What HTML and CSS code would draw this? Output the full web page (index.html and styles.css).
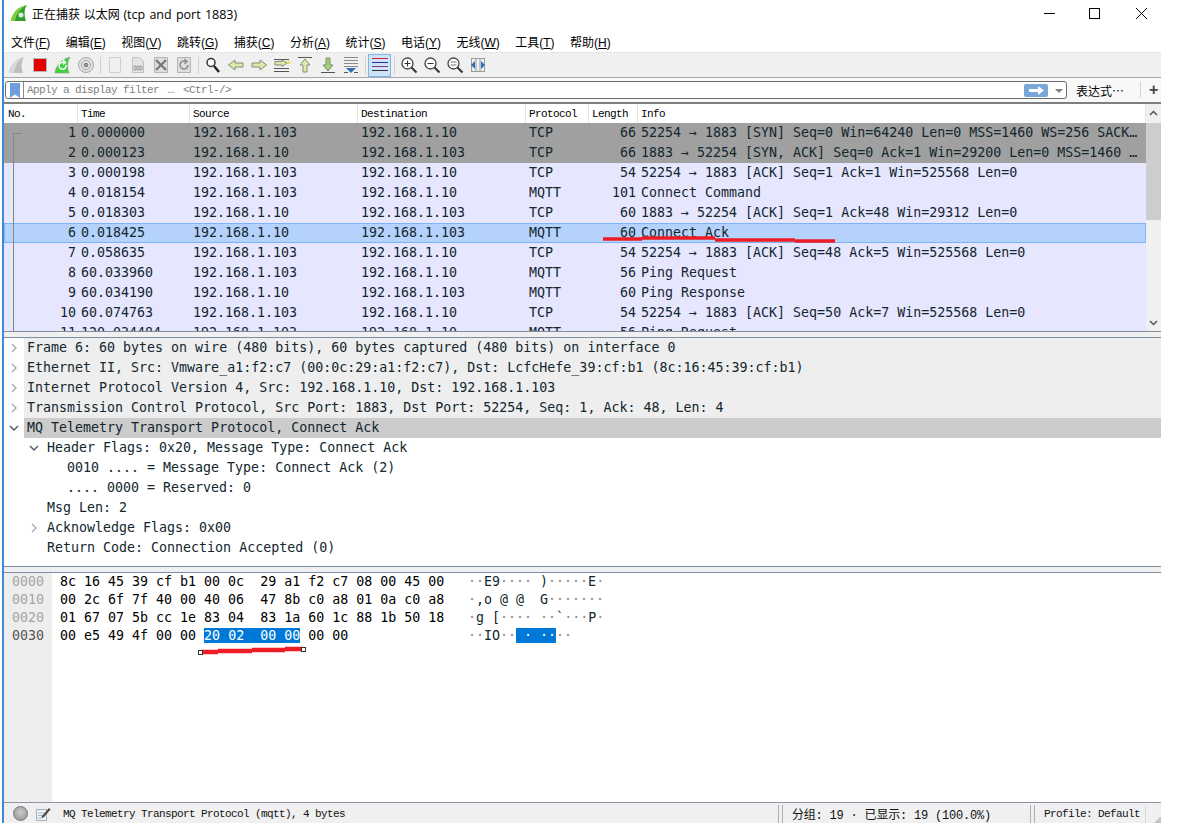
FILE: index.html
```html
<!DOCTYPE html>
<html lang="zh-CN">

<head>
    <meta charset="UTF-8">
    <title>正在捕获 以太网 (tcp and port 1883)</title>
    <link rel="stylesheet" href="styles.css">
</head>

<body>
    <div class="window">
        <div class="titlebar">
            <svg class="app-icon" width="16" height="16" viewBox="0 0 16 16"><path d="M0 16C1 8 7 2 16 0c-3 4-3 10-1 16z" fill="#2e9e2e"/><path d="M0 16C1 8 7 2 16 0C9 4 5 9 4 16z" fill="#7fd03a"/><circle cx="10" cy="10" r="2.5" fill="#d9f2d9"/></svg>
            <span class="title">正在捕获 以太网 <em>(tcp and port 1883)</em></span>
            <div class="win-btns">
                <svg width="46" height="20" viewBox="0 0 46 20"><path d="M18 10.5h11" stroke="#000"/></svg>
                <svg width="46" height="20" viewBox="0 0 46 20"><rect x="17.5" y="5.5" width="10" height="10" fill="none" stroke="#000"/></svg>
                <svg width="46" height="20" viewBox="0 0 46 20"><path d="M18 5l11 11M29 5L18 16" stroke="#000" fill="none"/></svg>
            </div>
        </div>

        <ul class="menubar">
            <li>文件(<u>F</u>)</li>
            <li>编辑(<u>E</u>)</li>
            <li>视图(<u>V</u>)</li>
            <li>跳转(<u>G</u>)</li>
            <li>捕获(<u>C</u>)</li>
            <li>分析(<u>A</u>)</li>
            <li>统计(<u>S</u>)</li>
            <li>电话(<u>Y</u>)</li>
            <li>无线(<u>W</u>)</li>
            <li>工具(<u>T</u>)</li>
            <li>帮助(<u>H</u>)</li>
        </ul>

        <div class="toolbar">
            <span class="tool"><svg width="18" height="18" viewBox="0 0 18 18"><path d="M1 17C2 9 8 3 16 1c-3 5-3 11-1 16z" fill="#bdbdbd"/><path d="M1 17C2 9 8 3 16 1C10 5 7 10 6 17z" fill="#d8d8d8"/></svg></span>
            <span class="tool"><svg width="18" height="18" viewBox="0 0 18 18"><rect x="2.5" y="2.5" width="13" height="13" fill="#e00000" stroke="#b5b5b5"/></svg></span>
            <span class="tool"><svg width="18" height="18" viewBox="0 0 18 18"><path d="M1 17C2 9 8 3 16 1c-3 5-3 11-1 16z" fill="#3fd13f" stroke="#8a9a8a" stroke-width=".6"/><path d="M12 9a3.5 3.5 0 1 1-2-2.5M9 4l2.5 2.5L9 8.500" fill="none" stroke="#fff" stroke-width="1.500"/></svg></span>
            <span class="tool"><svg width="18" height="18" viewBox="0 0 18 18"><circle cx="9" cy="9" r="7.500" fill="#e2e2e2" stroke="#a8a8a8"/><circle cx="9" cy="9" r="4.500" fill="#f2f2f2" stroke="#a0a0a0"/><circle cx="9" cy="9" r="2.500" fill="#8f8f8f"/></svg></span>
            <i class="sep"></i>
            <span class="tool"><svg width="18" height="18" viewBox="0 0 18 18"><path d="M3.500 1.500h11v15h-11z" fill="#efefef" stroke="#cfcfcf"/></svg></span>
            <span class="tool"><svg width="18" height="18" viewBox="0 0 18 18"><path d="M3.500 1.500h7l4 4v11h-11z" fill="#e4e4e4" stroke="#c0c0c0"/><path d="M5 10h2v4H5zM8 10h2v4H8zM11 10h2v4h-2z" fill="none" stroke="#909090" stroke-width=".8"/></svg></span>
            <span class="tool"><svg width="18" height="18" viewBox="0 0 18 18"><path d="M2.500 1.500h13v15h-13z" fill="#dedede" stroke="#b5b5b5"/><path d="M4 4l10 10M14 4L4 14" stroke="#777" stroke-width="2.200"/></svg></span>
            <span class="tool"><svg width="18" height="18" viewBox="0 0 18 18"><path d="M2.500 1.500h13v15h-13z" fill="#dedede" stroke="#b5b5b5"/><path d="M13 9a4 4 0 1 1-2-3.500M9.500 3l2.500 2.500L9.500 8" fill="none" stroke="#8f8f8f" stroke-width="1.600"/></svg></span>
            <i class="sep"></i>
            <span class="tool"><svg width="18" height="18" viewBox="0 0 18 18"><circle cx="7" cy="6.500" r="4" fill="#fff" stroke="#333" stroke-width="1.500"/><path d="M10 10l5 6" stroke="#222" stroke-width="2.400"/></svg></span>
            <span class="tool"><svg width="18" height="18" viewBox="0 0 18 18"><path d="M1.500 9L8 4v3h8v4H8v3z" fill="#dcebaa" stroke="#7f8f77"/></svg></span>
            <span class="tool"><svg width="18" height="18" viewBox="0 0 18 18"><path d="M16.500 9L10 4v3H2v4h8v3z" fill="#dcebaa" stroke="#7f8f77"/></svg></span>
            <span class="tool"><svg width="18" height="18" viewBox="0 0 18 18"><path d="M1 3.500h15M1 12.500h15M1 15.500h15" stroke="#555"/><path d="M14 7L9 4v1.500H2v3.500h7v1.500z" fill="#dcebaa" stroke="#7f8f77"/><rect x="14" y="5" width="3" height="3" fill="#f0e050"/></svg></span>
            <span class="tool"><svg width="18" height="18" viewBox="0 0 18 18"><path d="M2 1.500h14" stroke="#555"/><path d="M9 3l5 6h-3v7H7V9H4z" fill="#dcebaa" stroke="#7f8f77"/></svg></span>
            <span class="tool"><svg width="18" height="18" viewBox="0 0 18 18"><path d="M2 16.500h14" stroke="#555"/><path d="M9 15l5-6h-3V2H7v7H4z" fill="#9fd070" stroke="#7f8f77"/></svg></span>
            <span class="tool"><svg width="18" height="18" viewBox="0 0 18 18"><path d="M2 1.500h14M2 4.500h14M2 7.500h14M2 10.500h14" stroke="#8a8a8a"/><path d="M4 12h10l-5 5z" fill="#2f6fb5"/><path d="M2 16.500h4M12 16.500h4" stroke="#555"/></svg></span>
            <i class="sep"></i>
            <span class="tool active"><svg width="18" height="18" viewBox="0 0 18 18"><path d="M1 2.500h16" stroke="#d8203c"/><path d="M1 6.500h16" stroke="#2c2c9c"/><path d="M1 10.500h16" stroke="#8c2c8c"/><path d="M1 14.500h16" stroke="#333"/></svg></span>
            <i class="sep"></i>
            <span class="tool"><svg width="18" height="18" viewBox="0 0 18 18"><circle cx="7.500" cy="7.500" r="5.500" fill="#fff" stroke="#444" stroke-width="1.300"/><path d="M11.500 11.500l5 5" stroke="#333" stroke-width="2"/><path d="M4.500 7.500h6M7.500 4.500v6" stroke="#333"/></svg></span>
            <span class="tool"><svg width="18" height="18" viewBox="0 0 18 18"><circle cx="7.500" cy="7.500" r="5.500" fill="#fff" stroke="#444" stroke-width="1.300"/><path d="M11.500 11.500l5 5" stroke="#333" stroke-width="2"/><path d="M4.500 7.500h6" stroke="#333"/></svg></span>
            <span class="tool"><svg width="18" height="18" viewBox="0 0 18 18"><circle cx="7.500" cy="7.500" r="5.500" fill="#fff" stroke="#444" stroke-width="1.300"/><path d="M11.500 11.500l5 5" stroke="#333" stroke-width="2"/><path d="M4.500 6h6M4.500 9h6" stroke="#777"/></svg></span>
            <span class="tool"><svg width="18" height="18" viewBox="0 0 18 18"><path d="M2.500 2v14M15.500 2v14M2 2.500h14M2 15.500h14M7 2v14M11 2v14" stroke="#9a9a9a"/><path d="M2 9l4-4v8zM16 9l-4-4v8z" fill="#2f6fb5"/></svg></span>
        </div>

        <div class="filterbar">
            <div class="filter-box">
                <span class="bookmark"><svg width="10" height="15" viewBox="0 0 10 15"><path d="M0 0h10v15L5 11.500 0 15z" fill="#6e9fdc"/></svg></span>
                <span class="filter-hint">Apply a display filter <span class="ell">…</span> &lt;Ctrl-/&gt;</span>
                <span class="go-btn"><svg width="24" height="13" viewBox="0 0 24 13"><rect width="24" height="13" rx="2" fill="#7aa7d9"/><path d="M5 5h9V2l6 4.500-6 4.500V8H5z" fill="#fff"/></svg></span>
                <span class="drop"></span>
            </div>
            <span class="expr">表达式…</span>
            <i class="expr-sep"></i>
            <span class="plus">+</span>
        </div>

        <div class="packets">
            <div class="packet-table">
                <div class="cols cols-head">
                    <span>No.</span><span>Time</span><span>Source</span><span>Destination</span><span>Protocol</span><span>Length</span><span>Info</span>
                </div>
                <div class="cols row syn"><span class="num">1</span><span>0.000000</span><span>192.168.1.103</span><span>192.168.1.10</span><span>TCP</span><span class="num">66</span><span>52254 → 1883 [SYN] Seq=0 Win=64240 Len=0 MSS=1460 WS=256 SACK…</span></div>
                <div class="cols row syn"><span class="num">2</span><span>0.000123</span><span>192.168.1.10</span><span>192.168.1.103</span><span>TCP</span><span class="num">66</span><span>1883 → 52254 [SYN, ACK] Seq=0 Ack=1 Win=29200 Len=0 MSS=1460 …</span></div>
                <div class="cols row"><span class="num">3</span><span>0.000198</span><span>192.168.1.103</span><span>192.168.1.10</span><span>TCP</span><span class="num">54</span><span>52254 → 1883 [ACK] Seq=1 Ack=1 Win=525568 Len=0</span></div>
                <div class="cols row"><span class="num">4</span><span>0.018154</span><span>192.168.1.103</span><span>192.168.1.10</span><span>MQTT</span><span class="num">101</span><span>Connect Command</span></div>
                <div class="cols row"><span class="num">5</span><span>0.018303</span><span>192.168.1.10</span><span>192.168.1.103</span><span>TCP</span><span class="num">60</span><span>1883 → 52254 [ACK] Seq=1 Ack=48 Win=29312 Len=0</span></div>
                <div class="cols row current"><span class="num">6</span><span>0.018425</span><span>192.168.1.10</span><span>192.168.1.103</span><span>MQTT</span><span class="num">60</span><span>Connect Ack</span></div>
                <div class="cols row"><span class="num">7</span><span>0.058635</span><span>192.168.1.103</span><span>192.168.1.10</span><span>TCP</span><span class="num">54</span><span>52254 → 1883 [ACK] Seq=48 Ack=5 Win=525568 Len=0</span></div>
                <div class="cols row"><span class="num">8</span><span>60.033960</span><span>192.168.1.103</span><span>192.168.1.10</span><span>MQTT</span><span class="num">56</span><span>Ping Request</span></div>
                <div class="cols row"><span class="num">9</span><span>60.034190</span><span>192.168.1.10</span><span>192.168.1.103</span><span>MQTT</span><span class="num">60</span><span>Ping Response</span></div>
                <div class="cols row"><span class="num">10</span><span>60.074763</span><span>192.168.1.103</span><span>192.168.1.10</span><span>TCP</span><span class="num">54</span><span>52254 → 1883 [ACK] Seq=50 Ack=7 Win=525568 Len=0</span></div>
                <div class="cols row"><span class="num">11</span><span>120.034484</span><span>192.168.1.103</span><span>192.168.1.10</span><span>MQTT</span><span class="num">56</span><span>Ping Request</span></div>
                <i class="conv-line"></i>
            </div>
            <div class="scrollbar">
                <svg class="sb-arrow" width="15" height="19" viewBox="0 0 15 19"><path d="M4 11l3.500-3.500L11 11" fill="none" stroke="#555" stroke-width="1.500"/></svg>
                <div class="sb-thumb"></div>
                <div class="sb-track"></div>
                <svg class="sb-arrow" width="15" height="17" viewBox="0 0 15 17"><path d="M4 7l3.500 3.500L11 7" fill="none" stroke="#555" stroke-width="1.500"/></svg>
            </div>
        </div>

        <div class="splitter"></div>

        <div class="details">
            <div class="node closed"><svg class="chev" width="10" height="10" viewBox="0 0 10 10"><path d="M3 1l4 4-4 4" /></svg><span>Frame 6: 60 bytes on wire (480 bits), 60 bytes captured (480 bits) on interface 0</span></div>
            <div class="node closed"><svg class="chev" width="10" height="10" viewBox="0 0 10 10"><path d="M3 1l4 4-4 4" /></svg><span>Ethernet II, Src: Vmware_a1:f2:c7 (00:0c:29:a1:f2:c7), Dst: LcfcHefe_39:cf:b1 (8c:16:45:39:cf:b1)</span></div>
            <div class="node closed"><svg class="chev" width="10" height="10" viewBox="0 0 10 10"><path d="M3 1l4 4-4 4" /></svg><span>Internet Protocol Version 4, Src: 192.168.1.10, Dst: 192.168.1.103</span></div>
            <div class="node closed"><svg class="chev" width="10" height="10" viewBox="0 0 10 10"><path d="M3 1l4 4-4 4" /></svg><span>Transmission Control Protocol, Src Port: 1883, Dst Port: 52254, Seq: 1, Ack: 48, Len: 4</span></div>
            <div class="node picked"><svg class="chev open" width="10" height="10" viewBox="0 0 10 10"><path d="M1 3l4 4 4-4" /></svg><span>MQ Telemetry Transport Protocol, Connect Ack</span></div>
            <div class="node lvl1"><svg class="chev open" width="10" height="10" viewBox="0 0 10 10"><path d="M1 3l4 4 4-4" /></svg><span>Header Flags: 0x20, Message Type: Connect Ack</span></div>
            <div class="node lvl2"><span>0010 .... = Message Type: Connect Ack (2)</span></div>
            <div class="node lvl2"><span>.... 0000 = Reserved: 0</span></div>
            <div class="node lvl1 leaf"><span>Msg Len: 2</span></div>
            <div class="node lvl1"><svg class="chev" width="10" height="10" viewBox="0 0 10 10"><path d="M3 1l4 4-4 4" /></svg><span>Acknowledge Flags: 0x00</span></div>
            <div class="node lvl1 leaf"><span>Return Code: Connection Accepted (0)</span></div>
        </div>

        <div class="splitter splitter2"></div>

        <div class="bytes">
            <div class="offsets">
                <div>0000</div>
                <div>0010</div>
                <div>0020</div>
                <div class="on">0030</div>
            </div>
            <div class="hex">
                <div>8c 16 45 39 cf b1 00 0c  29 a1 f2 c7 08 00 45 00</div>
                <div>00 2c 6f 7f 40 00 40 06  47 8b c0 a8 01 0a c0 a8</div>
                <div>01 67 07 5b cc 1e 83 04  83 1a 60 1c 88 1b 50 18</div>
                <div>00 e5 49 4f 00 00 <b>20 02  00 00</b> 00 00</div>
            </div>
            <div class="ascii">
                <div><s>··</s>E9<s>····</s> )<s>·····</s>E<s>·</s></div>
                <div><s>·</s>,o @ @  G<s>·······</s></div>
                <div><s>·</s>g [<s>····</s> <s>··</s>`<s>···</s>P<s>·</s></div>
                <div><s>··</s>IO<s>··</s><b> · ··</b><s>··</s></div>
            </div>
        </div>

        <div class="statusbar">
            <span class="led"></span>
            <svg class="note" width="16" height="16" viewBox="0 0 16 16"><path d="M1.500 3.500h10v11h-10z" fill="#eef3f7" stroke="#9fb0bd"/><path d="M3 7h6M3 9.500h6M3 12h4" stroke="#a8b8c4"/><path d="M7 10l7-8 1.500 1.500-7 8-2 .5z" fill="#444"/></svg>
            <span class="st-text st-main">MQ Telemetry Transport Protocol (mqtt), 4 bytes</span>
            <i class="grip"></i>
            <span class="st-text st-count">分组: 19 · 已显示: 19 (100.0%)</span>
            <i class="grip"></i>
            <span class="st-text st-profile">Profile: Default</span>
            <i class="st-sep"></i>
            <svg class="size-grip" width="6" height="6" viewBox="0 0 6 6"><path d="M4 0h2v2H4zM2 2h2v2H2zM4 2h2v2H4zM0 4h2v2H0zM2 4h2v2H2zM4 4h2v2H4z" fill="#c4c4c4"/></svg>
        </div>

        <!-- red marks drawn over the shot -->
        <svg class="marks" width="1159" height="823" viewBox="2 0 1159 823">
            <path d="M603 239h39M642 238h73M715 240h80M795 241h40" fill="none" stroke="#ee1c25" stroke-width="3.500"/>
            <path d="M201 652h17M218 651h34M252 650h33M285 649h18" fill="none" stroke="#ee1c25" stroke-width="4.500"/>
            <rect x="198.500" y="650.500" width="4" height="4" fill="#fff" stroke="#333"/>
            <rect x="301.500" y="647.500" width="4" height="4" fill="#fff" stroke="#333"/>
        </svg>
    </div>
</body>

</html>
```

FILE: styles.css
```css
* {
    margin: 0;
    padding: 0;
    box-sizing: border-box;
}

body {
    background: #fff;
    font-family: "Noto Sans CJK SC", sans-serif;
    overflow: hidden;
}

ul {
    list-style: none;
}

.window {
    position: relative;
    width: 1159px;
    height: 823px;
    margin-left: 2px;
    border-left: 2px solid #3c8ad8;
    display: flex;
    flex-direction: column;
    overflow: hidden;
}

.window > * {
    flex: none;
}

/* title */
.titlebar {
    height: 30px;
    display: flex;
    align-items: center;
    padding-left: 7px;
    background: #fff;
}

.app-icon {
    margin-top: -4px;
}

.title {
    margin-left: 5px;
    margin-top: -3px;
    font: 12px "Noto Sans CJK SC", sans-serif;
    word-spacing: 1px;
    color: #000;
}

.title em {
    font: 12.5px "Open Sans", sans-serif;
    word-spacing: 1px;
}

.win-btns {
    margin-left: auto;
    margin-right: -3px;
    display: flex;
    margin-top: -5px;
}

/* menu */
.menubar {
    height: 22px;
    display: flex;
    gap: 15.5px;
    padding-left: 7px;
    align-items: center;
    font: 12px "Liberation Sans", "Noto Sans CJK SC", sans-serif;
    color: #000;
}

/* tools */
.toolbar {
    height: 26px;
    display: flex;
    align-items: center;
    padding-left: 1px;
    background: #f0f0f0;
    border-top: 1px solid #e6e6e6;
    border-bottom: 1px solid #a8a8a8;
}

.tool {
    width: 23px;
    height: 23px;
    display: flex;
    align-items: center;
    justify-content: center;
}

.tool.active {
    background: #cde4f7;
    border: 1px solid #7eb4ea;
}

.sep {
    width: 6px;
    height: 17px;
    display: block;
    background: linear-gradient(#d0d0d0, #d0d0d0) no-repeat center / 1px 100%;
}

/* filter */
.filterbar {
    height: 26px;
    display: flex;
    align-items: center;
    background: #f8f8f8;
    padding-left: 1px;
    border-bottom: 2px solid #7f7f7f;
}

.filter-box {
    width: 1062px;
    height: 18px;
    display: flex;
    align-items: center;
    background: #fff;
    border: 1px solid #6d6d6d;
    border-radius: 3px;
}

.bookmark {
    width: 18px;
    height: 16px;
    display: flex;
    align-items: center;
    justify-content: center;
    border-right: 1px solid #8a8a8a;
}

.filter-hint {
    margin-left: 3px;
    font: 11px "Liberation Mono", monospace;
    letter-spacing: -.6px;
    color: #808080;
    white-space: pre;
}

.ell {
    display: inline-block;
    width: 12px;
    letter-spacing: 0;
    text-align: center;
}

.go-btn {
    margin-left: auto;
    height: 13px;
    line-height: 0;
}

.drop {
    width: 0;
    height: 0;
    margin: 1px 3px 0 7px;
    border: 4px solid transparent;
    border-top: 4px solid #808080;
    border-bottom: 0;
}

.expr {
    margin-left: 9px;
    font-size: 12px;
    color: #000;
}

.expr-sep {
    width: 1px;
    height: 16px;
    margin-left: 16px;
    background: #d4d4d4;
}

.plus {
    margin-left: 8px;
    font: bold 16px "Liberation Sans", sans-serif;
    color: #444;
}

/* packet list */
.packets {
    height: 227px;
    display: flex;
    overflow: hidden;
}

.packet-table {
    position: relative;
    flex: 1;
    overflow: hidden;
}

.cols {
    display: grid;
    grid-template-columns: 74px 112px 168px 168px 63px 49px 1fr;
}

.cols-head {
    height: 19px;
    align-items: center;
    background: #fff;
    font: 11px "Liberation Mono", monospace;
    letter-spacing: -.6px;
    color: #000;
}

.cols-head span {
    height: 19px;
    line-height: 21px;
    padding-left: 4px;
    border-right: 1px solid #e4e4e4;
    white-space: pre;
}

.cols-head span:nth-child(n+2) {
    padding-left: 3px;
}

.row {
    height: 20px;
    background: #e7e6ff;
    color: #12272e;
    font: 13.3px/20px "DejaVu Sans Mono", monospace;
    white-space: pre;
    overflow: hidden;
}

.row span {
    padding-left: 3px;
    overflow: hidden;
}

.row .num {
    padding: 0 2px 0 0;
    text-align: right;
}

.row.syn {
    background: #a0a0a0;
}

.row.current {
    background: #b5d2fc;
    box-shadow: inset 0 0 0 1px #7db4f8;
}

.conv-line {
    position: absolute;
    left: 9px;
    top: 29px;
    width: 9px;
    height: 200px;
    border-left: 1px solid #7c8a90;
    border-top: 1px solid #7c8a90;
}

.scrollbar {
    width: 15px;
    display: flex;
    flex-direction: column;
    background: #f0f0f0;
}

.sb-thumb {
    height: 97px;
    background: #cdcdcd;
}

.sb-track {
    flex: 1;
}

.sb-arrow {
    flex: none;
}

/* splitters */
.splitter {
    height: 7px;
    background: #f0f0f0;
    border-top: 1px solid #7f8f9f;
    border-bottom: 1px solid #7f8f9f;
}

/* details */
.details {
    height: 228px;
    font: 13.3px/20px "DejaVu Sans Mono", monospace;
    color: #12272e;
    background: #fff;
}

.node {
    height: 20px;
    display: flex;
    align-items: center;
    padding-left: 5px;
}

.node span {
    flex: 1;
    padding-left: 3px;
    height: 20px;
    white-space: pre;
}

.chev {
    margin-right: 5px;
    fill: none;
    stroke: #a8a8a8;
    stroke-width: 1.4;
    flex: none;
}

.chev.open {
    stroke: #555;
}

.closed span {
    background: #eee;
}

.picked span {
    background: #ccc;
}

.lvl1 {
    padding-left: 25px;
}

.lvl1.leaf {
    padding-left: 40px;
}

.lvl2 {
    padding-left: 60px;
}

/* bytes */
.bytes {
    height: 229px;
    display: flex;
    font: 13.3px/18px "DejaVu Sans Mono", monospace;
    color: #000;
    background: #fff;
}

.bytes div div {
    white-space: pre;
}

.offsets {
    width: 48px;
    padding-left: 8px;
    background: #eee;
    color: #a5a5a5;
}

.offsets .on {
    color: #555;
}

.hex {
    width: 416px;
    padding-left: 8px;
}

.hex b,
.ascii b {
    font-weight: normal;
    background: #0078d7;
    color: #fff;
}

.ascii {
    color: #12272e;
}

.ascii s {
    text-decoration: none;
    color: #8a8a8a;
}

/* status */
.statusbar {
    height: 22px;
    display: flex;
    align-items: center;
    background: #f0f0f0;
    border-top: 1px solid #8a98a6;
}

.led {
    width: 15px;
    height: 15px;
    margin-left: 9px;
    border-radius: 50%;
    border: 1px solid #777;
    background: radial-gradient(circle at 50% 40%, #c8c8c8, #929292);
}

.note {
    margin-left: 7px;
}

.st-text {
    font: 11px "Liberation Mono", "Noto Sans CJK SC", monospace;
    letter-spacing: -.6px;
    color: #111;
    white-space: pre;
}

.st-main {
    margin-left: 12px;
    width: 715px;
}

.st-count {
    width: 238px;
    margin-left: 9px;
    font-size: 12px;
    letter-spacing: -.2px;
}

.st-profile {
    margin-left: 9px;
    width: 96px;
}

.grip {
    width: 5px;
    height: 18px;
    border-left: 1px solid #b0b0b0;
    border-right: 1px solid #b0b0b0;
}

.st-sep {
    width: 1px;
    height: 18px;
    margin-left: 5px;
    background: #d8d8d8;
}

.size-grip {
    margin-left: auto;
    align-self: flex-end;
    margin-bottom: 1px;
}

.marks {
    position: absolute;
    left: -2px;
    top: 0;
    pointer-events: none;
}
```
